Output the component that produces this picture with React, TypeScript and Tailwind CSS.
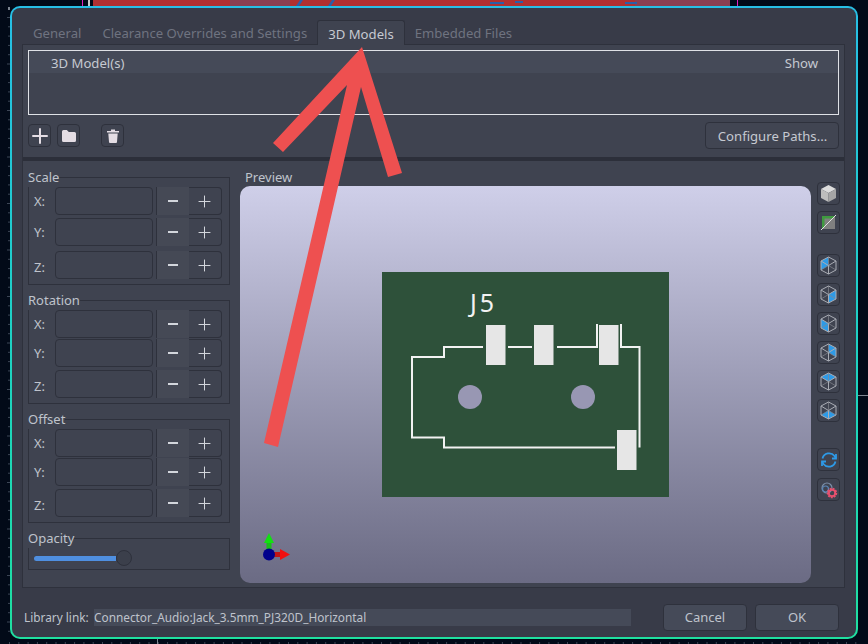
import React from 'react';
import { Plus } from 'lucide-react';

const font = { fontFamily: '"Noto Sans", sans-serif' };

const SpinRow = ({ label, labelClass = '', className = '' }: { label: string; labelClass?: string; className?: string }) => (
  <div className={`flex h-[28px] ${className}`}>
    <span className={`w-[21px] text-[13px] leading-[28px] text-[#bfc3cc] ${labelClass}`}>{label}</span>
    <div className="w-[98px] rounded-[4px] border border-[#2e313c] bg-[#3f4350]" />
    <div className="ml-[3px] flex w-[33px] items-center justify-center border-l border-[#2e313c] bg-[#454955]">
      <div className="h-[2px] w-[10px] bg-[#d3d6dc]" />
    </div>
    <div className="flex w-[33px] items-center justify-center rounded-r-[4px] border border-l-0 border-[#2e313c] pr-px">
      <Plus size={19} strokeWidth={1} absoluteStrokeWidth className="text-[#d3d6dc]" />
    </div>
  </div>
);

const Group = ({ title, className, children }: { title: string; className: string; children: React.ReactNode }) => (
  <div className={`w-[202px] border border-[#2e313c] pl-[5px] ${className}`}>
    <div className="-mb-[9px] -ml-[6px] -mt-[10px] h-[19px] w-fit bg-[#3f4350] text-[13px] leading-[19px] text-[#bfc3cc]">{title}</div>
    {children}
  </div>
);

const ToolButton = ({ children, className = '' }: { children: React.ReactNode; className?: string }) => (
  <button className={`flex h-[23px] w-[23px] items-center justify-center rounded-[4px] border border-[#2e313c] ${className}`}>
    {children}
  </button>
);

// wireframe cube with one face painted blue
const Cube = ({ face }: { face: string }) => (
  <svg width="17" height="19" viewBox="0 0 17 19">
    <path d={face} fill="#2e9ae6" />
    <path d="M8.500 1V9.500M1 14l7.500-4.500L16 14" fill="none" stroke="#85888f" strokeWidth=".7" />
    <path d="M8.500 1 16 5v9l-7.500 4L1 14V5z M1 5l7.500 4.500L16 5 M8.500 9.500V18" fill="none" stroke="#a9acb4" strokeWidth="1" />
  </svg>
);

const cubeFaces = [
  'M8.500 1 1 5v9l7.500-4.500z',
  'M16 5 8.500 9.500V18l7.500-4z',
  'M1 5l7.500 4.500V18L1 14z',
  'M8.500 1 16 5v9L8.500 9.500z',
  'M8.500 1 16 5 8.500 9.500 1 5z',
  'M1 14l7.500-4.500L16 14l-7.500 4z',
];

const Board = () => (
  <svg width="287" height="225" viewBox="382 272 287 225" className="block">
    <rect x="382" y="272" width="287" height="225" fill="#2e513a" />
    <g fill="#e6e6e6">
      <rect x="486" y="325" width="19.500" height="40" />
      <rect x="534" y="325" width="19.500" height="40" />
      <rect x="599" y="325" width="19.500" height="40" />
      <rect x="617" y="430" width="19.500" height="40" />
    </g>
    <circle cx="470" cy="397" r="12" fill="#9897b3" />
    <circle cx="583" cy="397" r="12" fill="#9897b3" />
    <g fill="none" stroke="#f2f2f2" strokeWidth="2">
      <path d="M483 347H444V357H412V437.500H444V447.500H615" />
      <path d="M508 347H532" />
      <path d="M557 347H597V324" />
      <path d="M621 324V347H639.500V447.500" />
    </g>
    <text x="470" y="312" fontSize="25" letterSpacing="3" fill="#f2f2f2" style={font}>J5</text>
  </svg>
);

const Axes = () => (
  <svg width="30" height="36" viewBox="0 0 30 36" className="absolute bottom-[15px] left-[20px]">
    <rect x="6.500" y="9" width="5" height="12" fill="#18c018" />
    <path d="M9 1l5 10H4z" fill="#12e012" />
    <rect x="12" y="20" width="9" height="5" fill="#c01414" />
    <path d="M20 17l10 5.500L20 28z" fill="#f01010" />
    <circle cx="9" cy="22.500" r="6" fill="#00008c" />
  </svg>
);

const Rulers = () => (
  <svg width="10" height="633" viewBox="0 0 10 633" className="shrink-0">
    <rect x="8" y="1" width="3" height="3" fill="#7d8590" />
    {Array.from({ length: 67 }).map((_, i) => (
      <rect key={i} x={i % 5 === 0 ? 7 : 8} y={i * 9.300 + 11} width={i % 5 === 0 ? 3 : 2} height="1" fill="#3d4656" />
    ))}
  </svg>
);

export default function App() {
  return (
    <div className="relative h-[644px] w-[868px] overflow-hidden bg-[#020a18]" style={font}>
      {/* board behind the dialog */}
      <svg width="868" height="6" viewBox="0 0 868 6" className="block">
        <rect x="93" y="0" width="637" height="6" fill="#b03030" />
        <rect x="82" y="0" width="1" height="6" fill="#e020c0" />
        <rect x="88" y="0" width="2" height="6" fill="#c9c9c9" />
        <rect x="230" y="0" width="60" height="6" fill="#8a3f52" />
        <rect x="635" y="0" width="95" height="6" fill="#8a3f52" />
        <rect x="737" y="0" width="1" height="6" fill="#e020c0" />
        <path d="M296 6l4-6h3l-4 6z M328 6l4-6h3l-4 6z M490 2h14v2h-14z M515 1h8v2h-8z M625 2h12v2h-12z" fill="#2a5ea8" />
      </svg>

      <div className="flex">
        <Rulers />
        <div className="h-[633px] w-[848px] shrink-0 rounded-[10px] bg-gradient-to-b from-[#27bfe6] to-[#1fe0a0] p-[2px]">
          <div className="flex h-full flex-col rounded-[8px] bg-[#383b48] pl-[10px] pr-[11px] pt-[12px]">
            {/* tabs */}
            <div className="flex h-[24px] pt-px text-[13.130px] leading-[24px] text-[#6f7380]">
              <div className="pl-[11px] pr-[21px]">General</div>
              <div className="pr-[10px]">Clearance Overrides and Settings</div>
              <div className="relative z-10 -mb-px -mt-px rounded-t-[3px] border border-b-0 border-[#2e313c] bg-[#3f4350] px-[10px] pt-px text-[#c6c9d1]">3D Models</div>
              <div className="px-[10px]">Embedded Files</div>
            </div>

            {/* notebook page */}
            <div className="flex h-[544px] flex-col border border-[#2e313c] bg-[#3f4350]">
              <div className="mx-[5px] mt-[5px] h-[65px] border border-[#dfe1e6]">
                <div className="flex h-[22px] items-center justify-between bg-[#454a58] pl-[22px] pr-[20px] pt-[3px] text-[13.130px] text-[#c6c9d1]">
                  <span>3D Model(s)</span>
                  <span>Show</span>
                </div>
              </div>

              <div className="mx-[5px] mt-[7px] flex h-[27px] items-center">
                <ToolButton><Plus size={24} strokeWidth={2} absoluteStrokeWidth className="shrink-0 text-[#e4dde4]" /></ToolButton>
                <ToolButton className="ml-[6px]">
                  <svg width="16" height="14" viewBox="0 0 16 14"><path d="M1 2.500A1.500 1.500 0 0 1 2.500 1h3.300l2 2h5.700A1.500 1.500 0 0 1 15 4.500v7a1.500 1.500 0 0 1-1.500 1.500h-11A1.500 1.500 0 0 1 1 11.500z" fill="#e4dde4" /></svg>
                </ToolButton>
                <ToolButton className="ml-[21px]">
                  <svg width="14" height="16" viewBox="0 0 14 16"><path d="M1 3h12v1.500H1z M5 1.500h4V3H5z" fill="#e4dde4" /><path d="M2.300 5.500h9.400l-.7 8.500a1 1 0 0 1-1 1H4a1 1 0 0 1-1-1z" fill="#e4dde4" /></svg>
                </ToolButton>
                <button className="ml-auto h-[27px] w-[134px] rounded-[4px] border border-[#2e313c] bg-[#414552] pl-px pt-[2px] text-[13.130px] text-[#c6c9d1]">Configure Paths...</button>
              </div>

              <div className="mt-[8px] h-[4px] bg-[#2c2f3a]" />

              {/* lower part */}
              <div className="flex flex-1">
                <div className="ml-[5px] w-[202px] pt-[16px]">
                  <Group title="Scale" className="h-[108px]">
                    <SpinRow label="X:" className="mt-[9px]" />
                    <SpinRow label="Y:" className="mt-[3px]" />
                    <SpinRow label="Z:" labelClass="pt-[2px]" className="mt-[5px]" />
                  </Group>
                  <Group title="Rotation" className="mt-[15px] h-[104px]">
                    <SpinRow label="X:" className="mt-[9px]" />
                    <SpinRow label="Y:" className="mt-[1px]" />
                    <SpinRow label="Z:" labelClass="pt-[2px]" className="mt-[3px]" />
                  </Group>
                  <Group title="Offset" className="mt-[15px] h-[104px]">
                    <SpinRow label="X:" className="mt-[9px]" />
                    <SpinRow label="Y:" className="mt-[1px]" />
                    <SpinRow label="Z:" labelClass="pt-[2px]" className="mt-[3px]" />
                  </Group>
                  <Group title="Opacity" className="mt-[15px] h-[32px]">
                    <div className="mt-[11px] flex items-center">
                      <div className="h-[5px] w-[82px] rounded-l-full bg-[#4f8fe0]" />
                      <div className="h-[16px] w-[16px] rounded-full border border-[#2e313c] bg-[#3b3f4b]" />
                    </div>
                  </Group>
                </div>

                <div className="ml-[10px] flex flex-col">
                  <div className="mt-[7px] h-[18px] pl-[5px] text-[13px] leading-[18px] text-[#bfc3cc]">Preview</div>
                  <div className="relative flex h-[397px] w-[571px] items-center justify-center rounded-[10px] bg-gradient-to-b from-[#cfcfe9] to-[#6b6b84]">
                    <Board />
                    <Axes />
                  </div>
                </div>

                <div className="ml-[6px] flex flex-col pt-[21px]">
                  <ToolButton>
                    <svg width="17" height="19" viewBox="0 0 17 19"><path d="M8.500 1 16 5 8.500 9 1 5z" fill="#dcdcdc" /><path d="M1 5l7.500 4v9L1 14z" fill="#bdbdbd" /><path d="M16 5 8.500 9v9l7.500-4z" fill="#a5a5a5" /></svg>
                  </ToolButton>
                  <ToolButton className="mt-[6px]">
                    <svg width="15" height="15" viewBox="0 0 15 15"><rect x="1" y="1" width="13" height="13" fill="#808080" /><path d="M1 1h13L1 14z" fill="#3f9a3f" /><rect x="3.500" y="3.500" width="10.500" height="10.500" fill="#808080" /><path d="M0 15 15 0" stroke="#e0e0e0" strokeWidth="1" /></svg>
                  </ToolButton>
                  <ToolButton className="mt-[20px]"><Cube face={cubeFaces[0]} /></ToolButton>
                  {cubeFaces.slice(1).map((f, i) => (
                    <ToolButton key={i} className="mt-[6px]"><Cube face={f} /></ToolButton>
                  ))}
                  <ToolButton className="mt-[26px]">
                    <svg width="18" height="18" viewBox="0 0 18 18" fill="none" stroke="#2e9ae6" strokeWidth="1.800"><path d="M2.500 7.500A6.800 6.800 0 0 1 14.500 5l1.500 2.500" /><path d="M16 3v4.500h-4" /><path d="M15.500 10.500A6.800 6.800 0 0 1 3.500 13L2 10.500" /><path d="M2 15v-4.500h4" /></svg>
                  </ToolButton>
                  <ToolButton className="mt-[7px]">
                    <svg width="18" height="18" viewBox="0 0 18 18"><circle cx="7" cy="7" r="5" fill="none" stroke="#7b8ea8" strokeWidth="1.200" /><circle cx="5.500" cy="8" r="3" fill="none" stroke="#5a86b8" strokeWidth="1.200" /><circle cx="12" cy="12" r="4" fill="none" stroke="#e8506e" strokeWidth="2.500" strokeDasharray="1.800 .9" /><circle cx="12" cy="12" r="3.200" fill="none" stroke="#e8506e" strokeWidth="1.800" /></svg>
                  </ToolButton>
                </div>
              </div>
            </div>

            {/* footer */}
            <div className="mt-[16px] flex h-[27px] items-center text-[13px] text-[#bfc3cc]">
              <span className="ml-[2px] w-[70px] whitespace-nowrap text-[11.830px]">Library link:</span>
              <div className="flex h-[17px] w-[537px] items-center whitespace-nowrap bg-[#454a58] text-[11.830px]">Connector_Audio:Jack_3.5mm_PJ320D_Horizontal</div>
              <button className="ml-[32px] h-[27px] w-[84px] rounded-[4px] border border-[#2e313c] bg-[#454a58]">Cancel</button>
              <button className="ml-[8px] h-[27px] w-[84px] rounded-[4px] border border-[#2e313c] bg-[#454a58]">OK</button>
            </div>
          </div>
        </div>
        {/* ruler mark right of the dialog */}
        <svg width="10" height="633" viewBox="0 0 10 633" className="shrink-0">
          <rect x="0" y="389" width="10" height="1" fill="#7d8590" />
        </svg>
      </div>

      {/* ruler along the bottom */}
      <svg width="868" height="5" viewBox="0 0 868 5" className="block">
        {Array.from({ length: 92 }).map((_, i) => (
          <rect key={i} x={i * 9.300 + 9} y="3" width="1" height="2" fill="#3d4656" />
        ))}
        <rect x="157" y="0" width="1" height="5" fill="#7d8590" />
      </svg>

      {/* red annotation arrow drawn over the dialog */}
      <svg width="868" height="644" viewBox="0 0 868 644" className="pointer-events-none absolute left-0 top-0 z-20">
        <path d="M362 47 402 173 388 177 361 87 278 447 264 443 347 85 283 152 273 143z" fill="#ee5050" />
      </svg>
    </div>
  );
}
